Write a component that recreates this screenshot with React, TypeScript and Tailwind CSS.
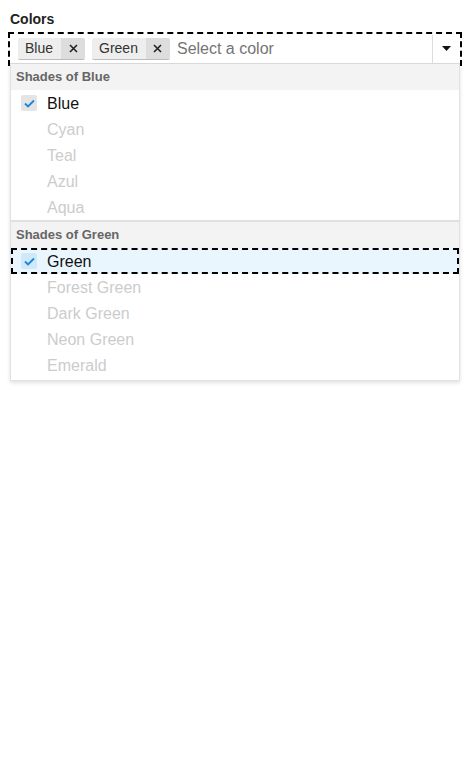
import React from 'react';

type Opt = { label: string; selected?: boolean; disabled?: boolean; active?: boolean };

const groups: { title: string; options: Opt[] }[] = [
  {
    title: 'Shades of Blue',
    options: [
      { label: 'Blue', selected: true },
      { label: 'Cyan', disabled: true },
      { label: 'Teal', disabled: true },
      { label: 'Azul', disabled: true },
      { label: 'Aqua', disabled: true },
    ],
  },
  {
    title: 'Shades of Green',
    options: [
      { label: 'Green', selected: true, active: true },
      { label: 'Forest Green', disabled: true },
      { label: 'Dark Green', disabled: true },
      { label: 'Neon Green', disabled: true },
      { label: 'Emerald', disabled: true },
    ],
  },
];

const Tag: React.FC<{ label: string }> = ({ label }) => (
  <div className="flex h-[21px] items-stretch rounded-[2px] text-[14px] text-[#333] shadow-[0_1px_0_#bbb]">
    <span className="flex items-center rounded-l-[2px] bg-[#eeeeee] pl-[7px] pr-[8px]">{label}</span>
    <button className="flex w-[24px] items-center justify-center rounded-r-[2px] bg-[#dddddd] text-[#222]">
      <svg width="9" height="9" viewBox="0 0 9 9">
        <path d="M1 1L8 8M8 1L1 8" stroke="currentColor" strokeWidth="1.6" />
      </svg>
    </button>
  </div>
);

const Check: React.FC<{ active?: boolean }> = ({ active }) => (
  <span
    className={`flex h-[16px] w-[16px] items-center justify-center rounded-[2px] ${
      active ? 'bg-[#cfe9fb]' : 'bg-[#e4e4e4]'
    }`}
  >
    <svg width="11" height="9" viewBox="0 0 11 9">
      <path d="M1 4.5L4 7.5L10 1.5" fill="none" stroke="#1a86d9" strokeWidth="1.8" />
    </svg>
  </span>
);

const App: React.FC = () => {
  return (
    <div className="min-h-[768px] bg-white px-[10px] pt-[10px] font-['Liberation_Sans',Arial,sans-serif]">
      <label className="block h-[24px] text-[14px] font-bold leading-[18px] text-[#222]">Colors</label>
      <div className="relative">
        <div className="flex h-[30px] items-center border-b border-[#dcdcdc] bg-white outline-2 outline-dashed outline-black">
          <div className="flex flex-1 items-center gap-[7px] pl-[8px]">
            <Tag label="Blue" />
            <Tag label="Green" />
            <span className="text-[16px] text-[#757575]">Select a color</span>
          </div>
          <div className="h-[28px] w-px bg-[#dcdcdc]" />
          <button className="flex h-full w-[27px] items-center justify-center">
            <svg width="9" height="5" viewBox="0 0 9 5">
              <path d="M0 0H9L4.5 5Z" fill="#111" />
            </svg>
          </button>
        </div>
        <ul className="relative z-10 border border-t-0 border-[#e2e2e2] bg-white pb-[2px] shadow-[0_2px_4px_rgba(0,0,0,0.12)]">
          {groups.map((g, gi) => (
            <li key={g.title} className={gi > 0 ? 'border-t-2 border-[#e0e0e0]' : ''}>
              <div className="flex h-[26px] items-center bg-[#f3f3f3] px-[5px] text-[13px] font-bold text-[#666]">
                {g.title}
              </div>
              <ul>
                {g.options.map((o) => (
                  <li
                    key={o.label}
                    className={`flex h-[26px] items-center gap-[10px] pl-[10px] text-[16px] ${
                      o.active ? 'bg-[#eaf6fd] outline-2 -outline-offset-2 outline-dashed outline-black' : ''
                    } ${o.disabled ? 'text-[#cccccc]' : 'text-[#111]'}`}
                  >
                    {o.selected ? <Check active={o.active} /> : <span className="w-[16px]" />}
                    <span className="pt-px">{o.label}</span>
                  </li>
                ))}
              </ul>
            </li>
          ))}
        </ul>
      </div>
    </div>
  );
};

export default App;
